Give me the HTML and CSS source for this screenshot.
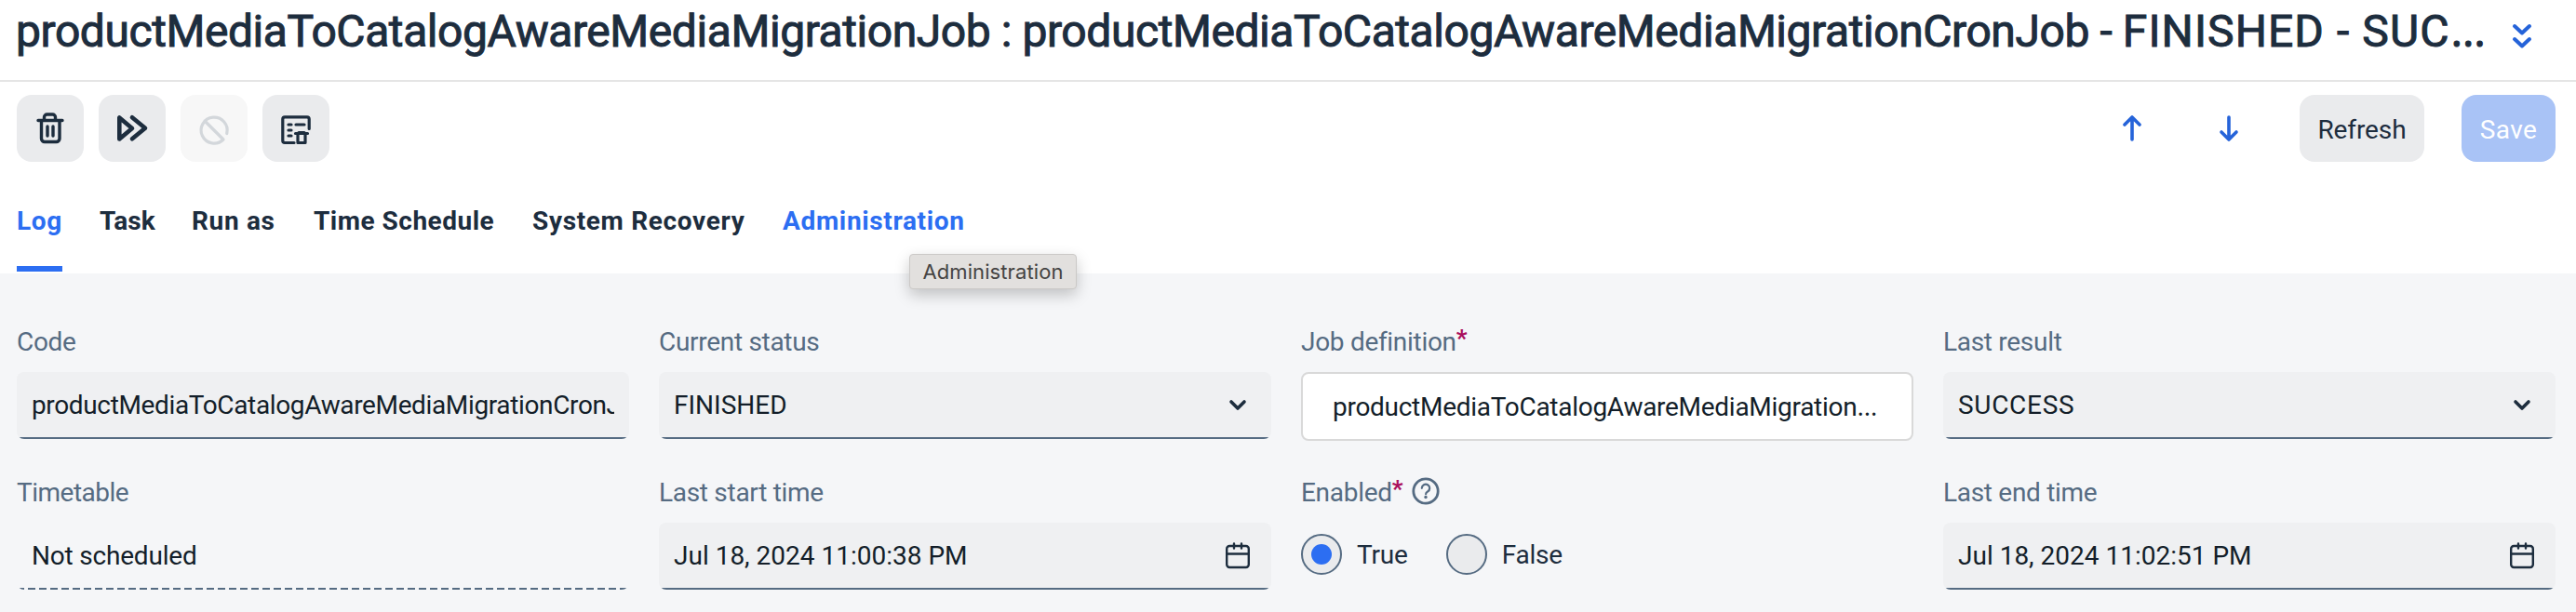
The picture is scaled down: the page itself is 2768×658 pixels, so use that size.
FILE: index.html
```
<!DOCTYPE html>
<html lang="en">
<head>
<meta charset="utf-8">
<title>CronJob editor</title>
<link rel="stylesheet" href="styles.css">
</head>
<body>
<header class="titlebar">
  <h1 class="title">productMediaToCatalogAwareMediaMigrationJob : productMediaToCatalogAwareMediaMigrationCronJob - <span class="state">FINISHED - SUC</span><span class="dots">…</span></h1>
  <svg class="expand" viewBox="0 0 24 32" fill="none" stroke="#2563d9" stroke-width="4" stroke-linecap="round" stroke-linejoin="round"><path d="M4 5l8 7.500 8-7.500M4 19l8 7.500 8-7.500"/></svg>
</header>

<div class="toolbar">
  <div class="actions">
    <button class="btn icon-btn" aria-label="Delete"><svg viewBox="0 0 72 72" fill="none" stroke="#1d2d3e" stroke-width="3.400" stroke-linecap="round" stroke-linejoin="round"><path d="M23 27.500h26M29.500 27v-3a3 3 0 0 1 3-3h6a3 3 0 0 1 3 3v3M26.500 28v19a3.500 3.500 0 0 0 3.500 3.500h12.500a3.500 3.500 0 0 0 3.500-3.500V28M33 34v10M39 34v10"/></svg></button>
    <button class="btn icon-btn" aria-label="Run"><svg viewBox="0 0 72 72" fill="none" stroke="#1d2d3e" stroke-width="4.600" stroke-linecap="round" stroke-linejoin="round"><path d="M22.300 24.500v23L36 36zM36 24.300L50 35.700 36 47.300"/></svg></button>
    <button class="btn icon-btn disabled" aria-label="Abort"><svg viewBox="0 0 72 72" fill="none" stroke="#d3d7db" stroke-width="3.200" stroke-linecap="round" stroke-linejoin="round"><path d="M49.700 41.500A14 14 0 1 0 46 48L26 28"/></svg></button>
    <button class="btn icon-btn" aria-label="Clear log"><svg viewBox="0 0 72 72" fill="none" stroke="#1d2d3e" stroke-width="3.200" stroke-linecap="round" stroke-linejoin="round"><path d="M34 51.500H24a2.200 2.200 0 0 1-2.200-2.200V26a2.200 2.200 0 0 1 2.200-2.200h24a2.200 2.200 0 0 1 2.200 2.200v10.500M28 32h3M36 32h9M28 38h3M28 44h3M35.500 41.500h13M39 40.500h6M38 42v9.500h8V42"/></svg></button>
  </div>
  <div class="controls">
    <svg class="arrow" viewBox="0 0 32 32" fill="none" stroke="#2563d9" stroke-width="3.600" stroke-linecap="round" stroke-linejoin="round"><path d="M16 28V4M8 12l8-8 8 8"/></svg>
    <svg class="arrow second" viewBox="0 0 32 32" fill="none" stroke="#2563d9" stroke-width="3.600" stroke-linecap="round" stroke-linejoin="round"><path d="M16 4v24M8 20l8 8 8-8"/></svg>
    <button class="btn refresh">Refresh</button>
    <button class="btn save">Save</button>
  </div>
</div>

<nav class="tabs">
  <a class="tab active">Log</a>
  <a class="tab task">Task</a>
  <a class="tab run">Run as</a>
  <a class="tab schedule">Time Schedule</a>
  <a class="tab recovery">System Recovery</a>
  <a class="tab hover">Administration<span class="tooltip">Administration</span></a>
</nav>

<main class="form">
  <div class="field">
    <div class="label">Code</div>
    <div class="input"><span class="value clip">productMediaToCatalogAwareMediaMigrationCronJob</span></div>
  </div>
  <div class="field">
    <div class="label">Current status</div>
    <div class="input"><span class="value">FINISHED</span><svg class="ico" viewBox="0 0 32 32" fill="none" stroke="#1d2d3e" stroke-width="3.600" stroke-linecap="round" stroke-linejoin="round"><path d="M9 13l7 7 7-7"/></svg></div>
  </div>
  <div class="field">
    <div class="label">Job definition<span class="req">*</span></div>
    <div class="input reference"><span class="value long">productMediaToCatalogAwareMediaMigration<span class="dots">…</span></span></div>
  </div>
  <div class="field">
    <div class="label">Last result</div>
    <div class="input"><span class="value caps">SUCCESS</span><svg class="ico" viewBox="0 0 32 32" fill="none" stroke="#1d2d3e" stroke-width="3.600" stroke-linecap="round" stroke-linejoin="round"><path d="M9 13l7 7 7-7"/></svg></div>
  </div>
  <div class="field">
    <div class="label tight">Timetable</div>
    <div class="input readonly"><span class="value tighter">Not scheduled</span></div>
  </div>
  <div class="field">
    <div class="label">Last start time</div>
    <div class="input"><span class="value">Jul 18, 2024 11:00:38 PM</span><svg class="ico" viewBox="0 0 32 32" fill="none" stroke="#1d2d3e" stroke-width="2.400" stroke-linecap="round" stroke-linejoin="round"><rect x="4.200" y="6" width="23.600" height="23" rx="3"/><path d="M4.200 14.500h23.600M12 3.500v5M20 3.500v5"/></svg></div>
  </div>
  <div class="field">
    <div class="label">Enabled<span class="req">*</span><svg class="help" viewBox="0 0 30 30" fill="none" stroke="#556b82" stroke-linecap="round" stroke-linejoin="round"><circle cx="15" cy="15" r="13.200" stroke-width="2.800"/><path d="M10.800 11.800a4.200 4.200 0 1 1 6.300 3.700c-1.500.9-2 1.300-2 2.700" stroke-width="2.200"/><circle cx="15" cy="21.500" r="1.700" fill="#556b82" stroke="none"/></svg></div>
    <div class="radios">
      <span class="radio checked"></span><span class="radio-text">True</span>
      <span class="radio"></span><span class="radio-text">False</span>
    </div>
  </div>
  <div class="field">
    <div class="label">Last end time</div>
    <div class="input"><span class="value">Jul 18, 2024 11:02:51 PM</span><svg class="ico" viewBox="0 0 32 32" fill="none" stroke="#1d2d3e" stroke-width="2.400" stroke-linecap="round" stroke-linejoin="round"><rect x="4.200" y="6" width="23.600" height="23" rx="3"/><path d="M4.200 14.500h23.600M12 3.500v5M20 3.500v5"/></svg></div>
  </div>
</main>
</body>
</html>
```
FILE: styles.css
```
* { box-sizing: border-box; }
body {
  margin: 0;
  height: 658px;
  overflow: hidden;
  background: #fff;
  color: #1d2d3e;
  font-family: Roboto, "Open Sans", sans-serif;
  font-size: 28px;
}
.titlebar {
  height: 88px;
  padding: 0 22px 0 17px;
  display: flex;
  justify-content: space-between;
  border-bottom: 2px solid #e5e5e5;
}
.title {
  margin: 6px 0 0;
  font-size: 48px;
  font-weight: 400;
  line-height: 56px;
  letter-spacing: -0.43px;
  white-space: nowrap;
  -webkit-text-stroke: 1px currentColor;
}
.state { letter-spacing: 1.1px; }
.dots { font-family: "Open Sans", sans-serif; line-height: 1; }
.state + .dots { letter-spacing: 0; margin-left: 1px; }
.expand { width: 24px; height: 32px; margin: 23px 24px 0 0; flex: none; }

.toolbar {
  height: 100px;
  padding: 14px 22px 0 18px;
  display: flex;
  justify-content: space-between;
}
.actions { display: flex; gap: 16px; }
.controls { display: flex; align-items: flex-start; }
.btn {
  height: 72px;
  padding: 2px 0 0;
  border: 0;
  border-radius: 16px;
  background: #eaebed;
  color: #1d2d3e;
  font: 400 28px Roboto, sans-serif;
  text-align: center;
}
.icon-btn { width: 72px; padding: 0; }
.icon-btn svg { display: block; width: 72px; height: 72px; }
.disabled { background: #f7f7f7; }
.arrow { width: 32px; height: 32px; margin-top: 20px; }
.second { margin-left: 72px; }
.refresh { width: 134px; margin-left: 60px; letter-spacing: -0.1px; }
.save { width: 101px; margin-left: 40px; background: #a9c3f6; color: #fff; letter-spacing: 0.4px; }

.tabs { height: 106px; padding: 0 18px; display: flex; gap: 40px; }
.tab {
  position: relative;
  height: 104px;
  padding-top: 33px;
  border-bottom: 6px solid transparent;
  font-weight: 700;
  line-height: 33px;
  letter-spacing: 0.66px;
  white-space: nowrap;
}
.active { border-color: #2c6ef2; color: #2c6ef2; width: 49px; }
.task { width: 59px; letter-spacing: 0; }
.run { width: 91px; }
.schedule { width: 195px; letter-spacing: 0.5px; }
.recovery { width: 229px; letter-spacing: 0.66px; }
.hover { color: #2c6ef2; }
.tooltip {
  position: absolute;
  left: 136px;
  top: 85px;
  width: 180px;
  height: 38px;
  background: #e2e0de;
  border: 1px solid #cbc9c7;
  border-radius: 4px;
  box-shadow: 0 6px 16px rgba(0, 0, 0, 0.22);
  color: #454443;
  font: 400 22px/37px Inter, sans-serif;
  letter-spacing: 0.1px;
  text-align: center;
}

.form {
  height: 364px;
  padding: 56px 22px 0 18px;
  display: grid;
  grid-template-columns: repeat(4, 658px);
  grid-auto-rows: 162px;
  column-gap: 32px;
  align-content: start;
  background: #f5f6f8;
}
.label {
  display: flex;
  height: 50px;
  color: #556b82;
  line-height: 35px;
  letter-spacing: -0.3px;
  white-space: nowrap;
}
.tight { letter-spacing: -0.5px; }
.req { width: 13px; color: #aa0f5c; font-weight: 700; font-size: 26px; line-height: 28px; letter-spacing: 0; }
.help { width: 30px; height: 30px; margin: 1px 0 0 8px; }
.input {
  height: 72px;
  padding: 0 16px 2px;
  display: flex;
  align-items: center;
  justify-content: space-between;
  border-radius: 8px;
  background: linear-gradient(#556b82, #556b82) bottom / 100% 2px no-repeat #eff0f2;
  color: #131e29;
}
.value { white-space: nowrap; }
.clip { overflow: hidden; letter-spacing: -0.36px; }
.long { letter-spacing: -0.28px; }
.caps { letter-spacing: 0.7px; }
.tighter { letter-spacing: -0.2px; }
.ico { width: 32px; height: 32px; margin-right: 4px; }
.reference {
  height: 74px;
  padding: 0 32px;
  border: 2px solid #d9d9d9;
  background: #fff;
}
.readonly {
  background: repeating-linear-gradient(90deg, #556b82 0 8px, transparent 8px 12px) bottom / 100% 2px no-repeat;
}
.radios { display: flex; align-items: center; height: 68px; }
.radio {
  width: 44px;
  height: 44px;
  display: grid;
  place-items: center;
  border: 2px solid #556b82;
  border-radius: 50%;
  background: #eaebed;
}
.checked::after {
  content: "";
  width: 22px;
  height: 22px;
  border-radius: 50%;
  background: #2c6ef2;
}
.radio-text { margin-left: 16px; margin-right: 41px; letter-spacing: -0.2px; }
```
